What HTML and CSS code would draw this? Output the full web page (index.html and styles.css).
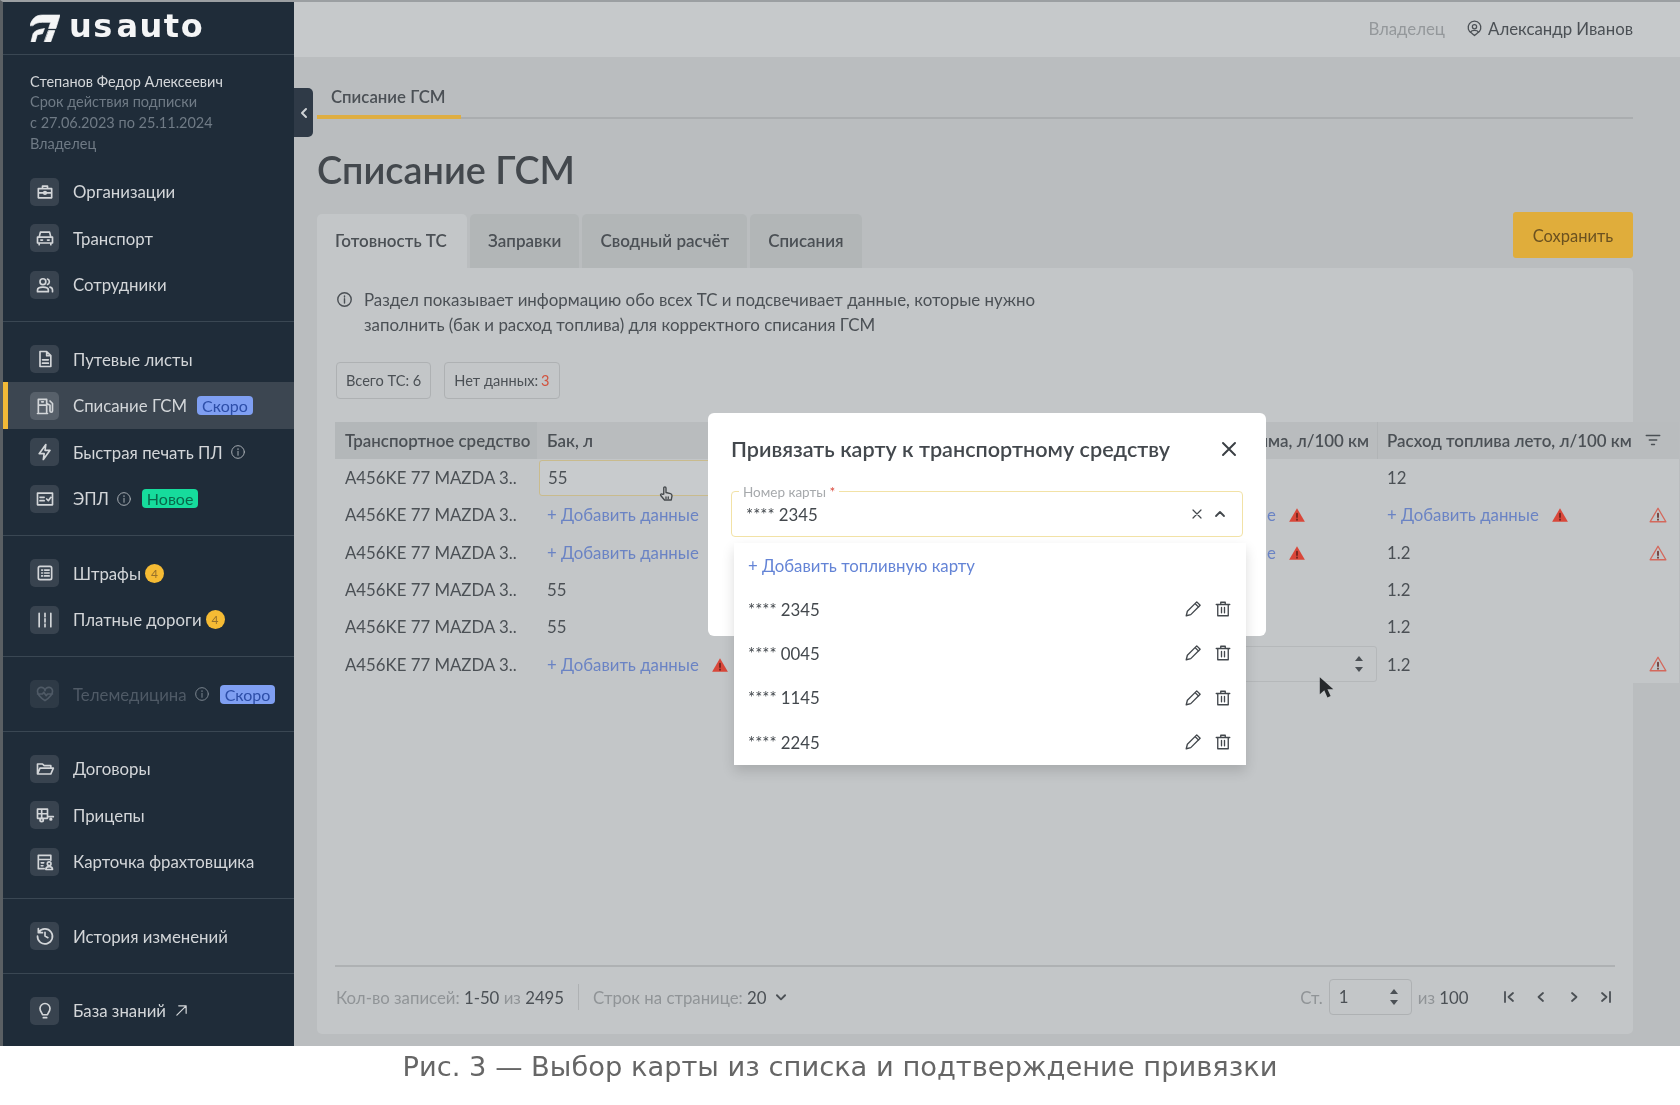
FILE: index.html
```html
<!DOCTYPE html>
<html lang="ru">
<head>
    <meta charset="UTF-8">
    <title>Списание ГСМ</title>
    <link rel="stylesheet" href="styles.css">
</head>
<body>
    <svg class="sprite" width="0" height="0">
        <symbol id="i-case" viewBox="0 0 24 24"><path d="M4 8h16v11H4zM9 8V5h6v3M4 13h16"/><circle cx="12" cy="13" r="1.6"/></symbol>
        <symbol id="i-car" viewBox="0 0 24 24"><path d="M5 11l1.500-6h11L19 11M3 11h18v7H3zM5 18v2M19 18v2M7 14.500h2M15 14.500h2"/></symbol>
        <symbol id="i-people" viewBox="0 0 24 24"><circle cx="9.500" cy="8" r="3.500"/><path d="M3 20v-2c0-2 2-3.500 6.500-3.500S16 16 16 18v2zM15 4.800a3.500 3.500 0 0 1 0 6.500M18 14.500c2 .5 3 1.700 3 3.500v2"/></symbol>
        <symbol id="i-doc" viewBox="0 0 24 24"><path d="M6 3h8l5 5v13H6zM14 3v5h5M9 13h7M9 17h7"/></symbol>
        <symbol id="i-fuel" viewBox="0 0 24 24"><path d="M4 21V4h10v17M4 11h10M3 21h12M14 9l4 2v7a1.500 1.500 0 0 0 3 0V9l-3-3M8 7h2"/></symbol>
        <symbol id="i-bolt" viewBox="0 0 24 24"><path d="M13 3L5 14h6l-1 7 8-11h-6z"/></symbol>
        <symbol id="i-epl" viewBox="0 0 24 24"><path d="M3 5h18v14H3zM6 10h5M6 14h5M14 12l2 2 3-4"/></symbol>
        <symbol id="i-list" viewBox="0 0 24 24"><rect x="4" y="4" width="16" height="16" rx="2"/><path d="M8 8.500h1M8 12h1M8 15.500h1M11.500 8.500H17M11.500 12H17M11.500 15.500H17"/></symbol>
        <symbol id="i-road" viewBox="0 0 24 24"><path d="M5 4v16M19 4v16M12 4v4M12 10.500v4M12 17v3"/></symbol>
        <symbol id="i-heart" viewBox="0 0 24 24"><path d="M12 20C6 16 3 12.500 3 9a4.500 4.500 0 0 1 9-1 4.500 4.500 0 0 1 9 1c0 3.500-3 7-9 11zM3 12h6l1.500-2 3 4 1.500-2h6"/></symbol>
        <symbol id="i-folder" viewBox="0 0 24 24"><path d="M3 18V6h6l2 2h8v3M3 18l3-7h16l-3 7z"/></symbol>
        <symbol id="i-trailer" viewBox="0 0 24 24"><path d="M3 5h12v11H3zM3 10.500h12M8 5v11M15 14h7"/><circle cx="8" cy="18" r="2"/><circle cx="19" cy="17" r="1"/></symbol>
        <symbol id="i-carrier" viewBox="0 0 24 24"><path d="M19 10V4H4v16h7M4 9h15M7.500 13h3M7.500 16.500h2"/><circle cx="17" cy="14" r="2.200"/><path d="M13 21c0-2.500 1.500-3.500 4-3.500s4 1 4 3.500z"/></symbol>
        <symbol id="i-history" viewBox="0 0 24 24"><path d="M4.500 7.500A9 9 0 1 1 3 12M4 3v5h5M12 7.500V12l3.500 2"/></symbol>
        <symbol id="i-bulb" viewBox="0 0 24 24"><path d="M9 16.500c0-2-3-3.500-3-7.500a6 6 0 0 1 12 0c0 4-3 5.500-3 7.500zM10 20h4"/></symbol>
        <symbol id="i-info" viewBox="0 0 24 24"><circle cx="12" cy="12" r="9.500"/><path d="M12 11v6M12 7v1.500"/></symbol>
        <symbol id="i-warn" viewBox="0 0 24 24"><path d="M12 3L1.500 21h21z"/><path class="warn-mark" d="M12 10v5M12 17.500v1"/></symbol>
        <symbol id="i-pencil" viewBox="0 0 24 24"><path d="M3 21l1.500-6L17 2.500l4.500 4.500L9 19.500zM15 5l4.500 4.500"/></symbol>
        <symbol id="i-trash" viewBox="0 0 24 24"><path d="M3 6h18M9 6V3h6v3M5 6v15h14V6M10 10v7M14 10v7"/></symbol>
        <symbol id="i-x" viewBox="0 0 24 24"><path d="M4 4l16 16M20 4L4 20"/></symbol>
        <symbol id="i-filter" viewBox="0 0 24 24"><path d="M3 6h18M7 12h10M10 18h4"/></symbol>
    </svg>

    <div class="app">
        <aside class="sidebar">
            <div class="logo">
                <svg class="logo-mark" viewBox="0 0 29 27"><path d="M0 11C2 4 6 1 12 1h17l-4 13h-7l2-6h-8c-4 0-7 1-9 3zM1 27l2-8c2-3 5-4 11-5l-2 5-5 1-2 7zM18 16h6l-4 11h-6z"/></svg>
                <span class="logo-text">us auto</span>
            </div>

            <div class="nav-group">
                <div class="user-info">
                    <div class="user-name">Степанов Федор Алексеевич</div>
                    <div>Срок действия подписки</div>
                    <div>с 27.06.2023 по 25.11.2024</div>
                    <div>Владелец</div>
                </div>
                <a class="nav-item"><span class="nav-icon"><svg><use href="#i-case"/></svg></span>Организации</a>
                <a class="nav-item"><span class="nav-icon"><svg><use href="#i-car"/></svg></span>Транспорт</a>
                <a class="nav-item"><span class="nav-icon"><svg><use href="#i-people"/></svg></span>Сотрудники</a>
            </div>

            <div class="nav-group">
                <a class="nav-item"><span class="nav-icon"><svg><use href="#i-doc"/></svg></span>Путевые листы</a>
                <a class="nav-item active"><span class="nav-icon"><svg><use href="#i-fuel"/></svg></span>Списание ГСМ<span class="tag tag-soon">Скоро</span></a>
                <a class="nav-item"><span class="nav-icon"><svg><use href="#i-bolt"/></svg></span>Быстрая печать ПЛ<svg class="nav-info"><use href="#i-info"/></svg></a>
                <a class="nav-item"><span class="nav-icon"><svg><use href="#i-epl"/></svg></span>ЭПЛ<svg class="nav-info"><use href="#i-info"/></svg><span class="tag tag-new">Новое</span></a>
            </div>

            <div class="nav-group">
                <a class="nav-item"><span class="nav-icon"><svg><use href="#i-list"/></svg></span>Штрафы<span class="count">4</span></a>
                <a class="nav-item"><span class="nav-icon"><svg><use href="#i-road"/></svg></span>Платные дороги<span class="count">4</span></a>
            </div>

            <div class="nav-group">
                <a class="nav-item disabled"><span class="nav-icon"><svg><use href="#i-heart"/></svg></span>Телемедицина<svg class="nav-info"><use href="#i-info"/></svg><span class="tag tag-soon">Скоро</span></a>
            </div>

            <div class="nav-group">
                <a class="nav-item"><span class="nav-icon"><svg><use href="#i-folder"/></svg></span>Договоры</a>
                <a class="nav-item"><span class="nav-icon"><svg><use href="#i-trailer"/></svg></span>Прицепы</a>
                <a class="nav-item"><span class="nav-icon"><svg><use href="#i-carrier"/></svg></span>Карточка фрахтовщика</a>
            </div>

            <div class="nav-group">
                <a class="nav-item"><span class="nav-icon"><svg><use href="#i-history"/></svg></span>История изменений</a>
            </div>

            <div class="nav-group last">
                <a class="nav-item"><span class="nav-icon"><svg><use href="#i-bulb"/></svg></span>База знаний<svg class="nav-ext" viewBox="0 0 14 14"><path d="M2 12L12 2M4 2h8v8"/></svg></a>
            </div>
        </aside>
        <button class="collapse"><svg viewBox="0 0 10 14"><path d="M7 3L3 7l4 4"/></svg></button>

        <main class="main">
            <header class="topbar">
                <span class="role">Владелец</span>
                <svg class="user-icon" viewBox="0 0 24 24"><path d="M12 22l-3.500-3A9 9 0 1 1 15.500 19z"/><circle cx="12" cy="9.500" r="3"/><path d="M6.500 17c1-2 3-2.500 5.500-2.500s4.500.5 5.500 2.500"/></svg>
                <span class="user">Александр Иванов</span>
            </header>

            <div class="page-tabs"><span class="page-tab">Списание ГСМ</span></div>
            <h1>Списание ГСМ</h1>

            <div class="tabs-row">
                <div class="tabs">
                    <span class="tab active">Готовность ТС</span>
                    <span class="tab">Заправки</span>
                    <span class="tab">Сводный расчёт</span>
                    <span class="tab">Списания</span>
                </div>
                <button class="save">Сохранить</button>
            </div>

            <section class="card">
                <div class="note">
                    <svg><use href="#i-info"/></svg>
                    <p>Раздел показывает информацию обо всех ТС и подсвечивает данные, которые нужно<br>заполнить (бак и расход топлива) для корректного списания ГСМ</p>
                </div>
                <div class="chips">
                    <span class="chip">Всего ТС: 6</span>
                    <span class="chip">Нет данных: <b>3</b></span>
                </div>

                <table class="grid">
                    <colgroup><col class="c1"><col class="c2"><col class="c3"><col class="c4"></colgroup>
                    <thead>
                        <tr>
                            <th class="first">Транспортное средство</th>
                            <th>Бак, л</th>
                            <th class="cut">зима, л/100 км</th>
                            <th class="divided">Расход топлива лето, л/100 км<svg class="th-filter"><use href="#i-filter"/></svg></th>
                        </tr>
                    </thead>
                    <tbody>
                        <tr>
                            <td>A456KE 77 MAZDA 3..</td>
                            <td class="editing"><span class="edit-box">55</span></td>
                            <td>12</td>
                            <td>12</td>
                        </tr>
                        <tr>
                            <td>A456KE 77 MAZDA 3..</td>
                            <td><a class="add">+ Добавить данные</a></td>
                            <td><a class="add">+ Добавить данные</a><svg class="warn"><use href="#i-warn"/></svg></td>
                            <td><a class="add">+ Добавить данные</a><svg class="warn"><use href="#i-warn"/></svg><svg class="warn-line"><use href="#i-warn"/></svg></td>
                        </tr>
                        <tr>
                            <td>A456KE 77 MAZDA 3..</td>
                            <td><a class="add">+ Добавить данные</a></td>
                            <td><a class="add">+ Добавить данные</a><svg class="warn"><use href="#i-warn"/></svg></td>
                            <td>1.2<svg class="warn-line"><use href="#i-warn"/></svg></td>
                        </tr>
                        <tr>
                            <td>A456KE 77 MAZDA 3..</td>
                            <td>55</td>
                            <td>12</td>
                            <td>1.2</td>
                        </tr>
                        <tr>
                            <td>A456KE 77 MAZDA 3..</td>
                            <td>55</td>
                            <td>12</td>
                            <td>1.2</td>
                        </tr>
                        <tr>
                            <td>A456KE 77 MAZDA 3..</td>
                            <td><a class="add">+ Добавить данные</a><svg class="warn"><use href="#i-warn"/></svg></td>
                            <td class="editing"><span class="edit-box plain"><span class="spin"><i class="up"></i><i class="down"></i></span></span></td>
                            <td>1.2<svg class="warn-line"><use href="#i-warn"/></svg></td>
                        </tr>
                    </tbody>
                </table>

                <footer class="pager">
                    <span class="muted">Кол-во записей:</span>&nbsp;1-50&nbsp;<span class="muted">из</span>&nbsp;2495
                    <span class="pager-sep"></span>
                    <span class="muted">Строк на странице:</span>&nbsp;20
                    <svg class="pager-down" viewBox="0 0 12 12"><path d="M2.500 4.500L6 8l3.500-3.500"/></svg>
                    <span class="pager-right">
                        <span class="muted">Ст.</span>
                        <span class="page-input">1<span class="spin"><i class="up"></i><i class="down"></i></span></span>
                        <span class="muted">из</span>&nbsp;100
                        <span class="pager-nav">
                            <svg viewBox="0 0 14 14"><path d="M3 2v10M11 3L6.500 7l4.500 4"/></svg>
                            <svg viewBox="0 0 14 14"><path d="M9 3L4.500 7 9 11"/></svg>
                            <svg viewBox="0 0 14 14"><path d="M5 3l4.500 4L5 11"/></svg>
                            <svg viewBox="0 0 14 14"><path d="M11 2v10M3 3l4.500 4L3 11"/></svg>
                        </span>
                    </span>
                </footer>
            </section>
        </main>

        <svg class="cursor-hand" viewBox="0 0 24 24"><path d="M9 12V4a1.500 1.500 0 0 1 3 0v6l6 1.500c1.500.4 2 1.500 2 3L19 20H10l-5-6c-1-1.500 1-3 2.500-1.500z"/><path d="M12 16v2M15 16v2"/></svg>
        <svg class="cursor-arrow" viewBox="0 0 20 26"><path d="M2 1v19l5-4.500 3.500 8 3.500-1.500-3.500-7.500H17z"/></svg>

        <div class="modal">
            <div class="modal-head">
                <h2>Привязать карту к транспортному средству</h2>
                <svg class="modal-close"><use href="#i-x"/></svg>
            </div>
            <div class="field">
                <span class="field-label">Номер карты <b>*</b></span>
                <span class="field-value">**** 2345</span>
                <svg class="field-x"><use href="#i-x"/></svg>
                <svg class="field-up" viewBox="0 0 12 12"><path d="M2 8l4-4 4 4"/></svg>
            </div>
            <div class="dropdown">
                <a class="dd-add">+ Добавить топливную карту</a>
                <div class="dd-row"><span>**** 2345</span><svg><use href="#i-pencil"/></svg><svg><use href="#i-trash"/></svg></div>
                <div class="dd-row"><span>**** 0045</span><svg><use href="#i-pencil"/></svg><svg><use href="#i-trash"/></svg></div>
                <div class="dd-row"><span>**** 1145</span><svg><use href="#i-pencil"/></svg><svg><use href="#i-trash"/></svg></div>
                <div class="dd-row"><span>**** 2245</span><svg><use href="#i-pencil"/></svg><svg><use href="#i-trash"/></svg></div>
            </div>
        </div>
    </div>

    <p class="caption">Рис. 3 — Выбор карты из списка и подтверждение привязки</p>
</body>
</html>
```

FILE: styles.css
```css
* {
    box-sizing: border-box;
}
html, body {
    margin: 0;
    height: 1105px;
    overflow: hidden;
    background: #fff;
}
body {
    font-family: Lato, "Noto Sans", sans-serif;
    font-size: 16.800px;
    color: #4b5055;
}
.sprite {
    position: absolute;
}
svg {
    fill: none;
    stroke: currentColor;
    stroke-width: 2;
    stroke-linecap: round;
    stroke-linejoin: round;
}

.app {
    position: relative;
    display: flex;
    height: 1046px;
    border-left: 3px solid #5a5f63;
    border-top: 2px solid #9b9fa2;
    background: #babdbf;
    filter: blur(0.6px);
}

/* sidebar */
.sidebar {
    width: 291px;
    flex: none;
    background: #1f2c39;
    color: #d3d6d9;
}
.logo {
    height: 53px;
    display: flex;
    align-items: center;
    gap: 9px;
    padding-left: 27px;
    border-bottom: 1px solid #3a4753;
    color: #f4f5f6;
}
.logo-mark {
    width: 30px;
    height: 28px;
    fill: currentColor;
    stroke: currentColor;
    stroke-width: 0.700;
}
.logo-text {
    font-family: "DejaVu Sans", sans-serif;
    font-weight: 700;
    font-size: 32px;
    line-height: 1;
    letter-spacing: 1.500px;
    word-spacing: -10px;
    margin-top: -4px;
}
.nav-group {
    padding: 13.500px 0;
    border-bottom: 1px solid #3a4753;
}
.nav-group.last {
    border-bottom: none;
}
.user-info {
    padding: 3px 27px 0;
    font-size: 14.500px;
    line-height: 20.700px;
    color: #6f7a85;
}
.user-name {
    color: #d3d6d9;
}
.user-info + .nav-item {
    margin-top: 14px;
}
.nav-item {
    height: 46.500px;
    display: flex;
    align-items: center;
    padding-left: 27px;
    white-space: nowrap;
}
.nav-item.active {
    background: #3c4651;
    border-left: 5px solid #f2b937;
    padding-left: 22px;
}
.nav-item.disabled {
    color: #4f5a66;
}
.nav-icon {
    width: 29px;
    height: 28px;
    margin-right: 14px;
    flex: none;
    display: flex;
    align-items: center;
    justify-content: center;
    border-radius: 5px;
    background: #38434f;
}
.active .nav-icon {
    background: #57606a;
}
.disabled .nav-icon {
    background: #2e3a46;
}
.nav-icon svg {
    width: 20px;
    height: 20px;
}
.nav-info {
    width: 16px;
    height: 16px;
    margin-left: 7px;
    stroke-width: 1.500;
    color: #a5abb1;
}
.disabled .nav-info {
    color: #7a848e;
}
.nav-ext {
    width: 13px;
    height: 13px;
    margin-left: 9px;
    stroke-width: 1.300;
}
.tag {
    margin-left: 10px;
    padding: 0 5px;
    height: 19px;
    line-height: 19px;
    border-radius: 4px;
    font-size: 16px;
}
.tag-soon {
    background: #7f9ff2;
    color: #2d4ea8;
}
.tag-new {
    background: #16dc9c;
    color: #08694b;
}
.count {
    width: 19px;
    height: 19px;
    margin-left: 4px;
    border-radius: 50%;
    background: #f5bb34;
    color: #97712b;
    font-size: 12px;
    line-height: 19px;
    text-align: center;
}
.collapse {
    position: absolute;
    left: 291px;
    top: 86px;
    width: 19px;
    height: 49px;
    padding: 0;
    border: none;
    border-radius: 0 5px 5px 0;
    background: #2f3a47;
    color: #cfd2d5;
    display: flex;
    align-items: center;
    justify-content: center;
}
.collapse svg {
    width: 10px;
    height: 14px;
}

/* main column */
.main {
    flex: 1;
    min-width: 0;
    display: flex;
    flex-direction: column;
    overflow: hidden;
    padding: 0 47px 12px 23px;
}
.topbar {
    height: 55px;
    margin: 0 -47px 0 -23px;
    padding: 0 47px 3px 0;
    flex: none;
    display: flex;
    align-items: center;
    justify-content: flex-end;
    background: #c6c9cb;
}
.role {
    color: #94989b;
    margin-right: 21px;
}
.user-icon {
    width: 17px;
    height: 17px;
    margin-right: 5px;
    stroke-width: 1.800;
}
.page-tabs {
    height: 62px;
    flex: none;
    display: flex;
    align-items: flex-end;
    border-bottom: 2px solid #aaadaf;
}
.page-tab {
    width: 144px;
    height: 53px;
    margin-bottom: -2px;
    padding: 21px 0 0 14px;
    font-size: 16.800px;
    line-height: 20px;
    font-weight: 600;
    border-bottom: 4px solid #dfae42;
    white-space: nowrap;
}
h1 {
    height: 95px;
    flex: none;
    margin: 0;
    padding-top: 25px;
    font-size: 37.800px;
    line-height: 52px;
    font-weight: 600;
    color: #43484d;
}
.tabs-row {
    height: 54px;
    flex: none;
    display: flex;
    justify-content: space-between;
    align-items: flex-start;
}
.tabs {
    display: flex;
    gap: 3px;
    height: 54px;
}
.tab {
    padding: 0 18px 1px;
    display: flex;
    align-items: center;
    background: #b2b6b7;
    border-radius: 5px 5px 0 0;
    font-size: 17px;
    font-weight: 600;
}
.tab.active {
    background: #c3c6c8;
    width: 150px;
}
.save {
    width: 120px;
    height: 46px;
    margin-top: -2px;
    padding-top: 2px;
    border: none;
    border-radius: 3px;
    background: #e0ad3b;
    color: #6b5120;
    font: inherit;
    font-size: 16.500px;
}
.card {
    flex: 1;
    display: flex;
    flex-direction: column;
    min-height: 0;
    padding: 19px 18px 0;
    background: #c3c6c8;
    border-radius: 0 5px 5px 5px;
}
.note {
    display: flex;
    gap: 10px;
}
.note svg {
    width: 17px;
    height: 17px;
    margin: 4px 0 0 1px;
    flex: none;
    stroke-width: 2;
}
.note p {
    margin: 0 0 0 1px;
    font-size: 16.900px;
    line-height: 25px;
    white-space: nowrap;
}
.chips {
    display: flex;
    gap: 13px;
    margin: 25px 0 0 1px;
}
.chip {
    height: 37px;
    padding: 0 9px;
    display: flex;
    align-items: center;
    gap: 3px;
    border: 1px solid #aeb1b3;
    border-radius: 4px;
    font-size: 14.600px;
}
.chip b {
    color: #d2533f;
    font-weight: 400;
}

/* table */
.grid {
    width: 1344px;
    margin-top: 23px;
    flex: none;
    table-layout: fixed;
    border-collapse: collapse;
    background: #c3c6c8;
}
.c1 { width: 202px; }
.c2 { width: 577px; }
.c3 { width: 263px; }
.c4 { width: 302px; }
th {
    height: 37px;
    padding: 0 10px;
    text-align: left;
    font-size: 16.900px;
    font-weight: 600;
    background: #b9bcbe;
    white-space: nowrap;
}
th.first {
    background: #b3b7b9;
}
th.cut {
    text-align: right;
    padding-right: 8px;
}
th.divided {
    position: relative;
    box-shadow: inset 1px 0 #b1b4b6;
}
.th-filter {
    position: absolute;
    right: 17px;
    top: 9px;
    width: 18px;
    height: 18px;
    stroke-width: 1.800;
}
td {
    position: relative;
    height: 37.300px;
    padding: 0 10px;
    white-space: nowrap;
}
.add {
    color: #6a83c4;
}
.warn {
    width: 18px;
    height: 18px;
    margin-left: 12px;
    vertical-align: -3px;
    fill: #d9473a;
    stroke: none;
}
.warn-mark {
    stroke: #5e1e18;
    stroke-width: 2;
}
.warn-line {
    position: absolute;
    right: 12px;
    top: 10px;
    width: 18px;
    height: 18px;
    stroke: #d4685c;
    stroke-width: 1.800;
}
td.editing {
    padding: 0 0 0 2px;
}
.edit-box {
    position: relative;
    display: block;
    height: 36px;
    line-height: 34px;
    padding-left: 8px;
    border: 1px solid #c9bb8d;
    border-radius: 3px;
    background: #c8cbcd;
}
.edit-box.plain {
    border-color: #b5b8ba;
    background: none;
}
.spin {
    position: absolute;
    right: 12px;
    top: 50%;
    width: 10px;
    height: 20px;
    margin-top: -10px;
}
.spin i {
    position: absolute;
    left: 1px;
    border-left: 4px solid transparent;
    border-right: 4px solid transparent;
}
.spin .up {
    top: 2px;
    border-bottom: 5px solid #4b5055;
}
.spin .down {
    bottom: 2px;
    border-top: 5px solid #4b5055;
}

/* footer */
.pager {
    height: 69px;
    margin-top: auto;
    padding: 0 0 7px 1px;
    display: flex;
    align-items: center;
    border-top: 2px solid #aeb1b3;
    white-space: nowrap;
}
.muted {
    color: #909497;
}
.pager-sep {
    width: 1px;
    height: 26px;
    margin: 0 14px;
    background: #aeb1b3;
}
.pager-down {
    width: 14px;
    height: 14px;
    margin-left: 7px;
    stroke-width: 1.600;
}
.pager-right {
    margin-left: auto;
    display: flex;
    align-items: center;
}
.page-input {
    position: relative;
    width: 83px;
    height: 36px;
    margin: 0 6px;
    padding-left: 9px;
    line-height: 34px;
    border: 1px solid #aeb1b3;
    border-radius: 4px;
}
.pager-nav {
    display: flex;
    gap: 18.500px;
    margin: 0 2px 0 33px;
}
.pager-nav svg {
    width: 14px;
    height: 14px;
    stroke-width: 1.800;
}

/* pointers caught in the video */
.cursor-hand {
    position: absolute;
    left: 654px;
    top: 482px;
    width: 18px;
    height: 20px;
    fill: #c9cbcc;
    stroke: #45494c;
    stroke-width: 1.800;
}
.cursor-arrow {
    position: absolute;
    left: 1315px;
    top: 674px;
    width: 18px;
    height: 24px;
    fill: #26292c;
    stroke: none;
}

/* modal */
.modal {
    position: absolute;
    left: 705px;
    top: 411px;
    width: 558px;
    height: 223px;
    padding: 0 23px;
    background: #fff;
    border-radius: 6px;
    color: #43484d;
}
.modal-head {
    height: 78px;
    padding: 0 5px 7px 0;
    display: flex;
    align-items: center;
    justify-content: space-between;
}
h2 {
    margin: 0;
    font-size: 21.600px;
    font-weight: 600;
    white-space: nowrap;
}
.modal-close {
    width: 18px;
    height: 18px;
    color: #3a3f44;
    stroke-width: 2.600;
}
.field {
    position: relative;
    height: 46px;
    display: flex;
    align-items: center;
    padding: 0 16px 0 14px;
    border: 1px solid #f2e2a6;
    border-radius: 4px;
}
.field-label {
    position: absolute;
    left: 7px;
    top: -7px;
    padding: 0 4px;
    background: #fff;
    font-size: 13.500px;
    line-height: 15px;
    color: #a6a9ac;
}
.field-label b {
    color: #d9473a;
    font-weight: 400;
}
.field-value {
    flex: 1;
}
.field-x {
    width: 12px;
    height: 12px;
    margin-right: 11px;
    stroke-width: 2.400;
}
.field-up {
    width: 12px;
    height: 12px;
    stroke-width: 1.800;
}
.dropdown {
    position: absolute;
    left: 26px;
    top: 130px;
    width: 512px;
    height: 222px;
    padding: 0 14px;
    background: #fff;
    box-shadow: 0 6px 12px rgba(0, 0, 0, 0.14);
}
.dd-add {
    display: block;
    height: 44px;
    padding-top: 12px;
    color: #6484d6;
}
.dd-row {
    height: 44.300px;
    display: flex;
    align-items: center;
    gap: 12px;
}
.dd-row span {
    flex: 1;
}
.dd-row svg {
    width: 18px;
    height: 18px;
    stroke-width: 1.800;
}

.caption {
    margin: 0;
    padding-top: 3px;
    text-align: center;
    font-family: "DejaVu Sans", sans-serif;
    font-size: 27.300px;
    line-height: 36px;
    color: #666;
    filter: blur(0.3px);
}
```
